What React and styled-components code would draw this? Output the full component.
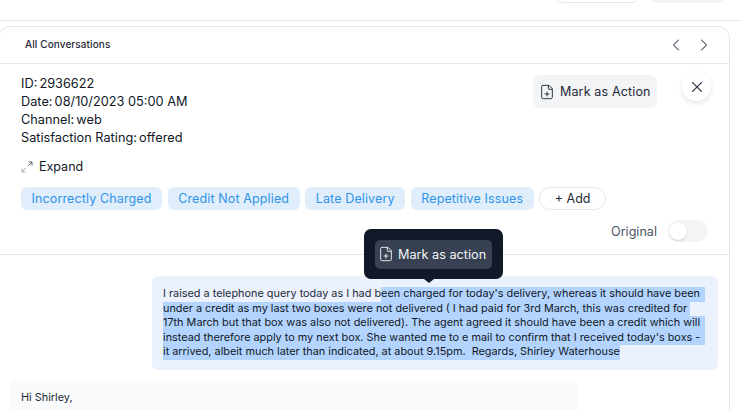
import React from 'react';
import styled, { createGlobalStyle } from 'styled-components';
import { ChevronLeft, ChevronRight, X, FilePlus } from 'lucide-react';

const GlobalStyle = createGlobalStyle`
  html, body {
    margin: 0;
    padding: 0;
    background: #fff;
    overflow: hidden;
  }
  * { box-sizing: border-box; }
`;

const Page = styled.div`
  position: relative;
  width: 741px;
  height: 410px;
  overflow: hidden;
  font-family: Inter, "Liberation Sans", sans-serif;
  color: #111827;
`;

const TopBar = styled.div`
  height: 21px;
  border-bottom: 1px solid #e5e7eb;
  display: flex;
  justify-content: flex-end;
  align-items: flex-end;
  gap: 9px;
  padding: 0 15px 17px 0;
`;

const TopButton = styled.div`
  width: ${(p) => p.$w}px;
  height: 24px;
  border-radius: 8px;
  background: ${(p) => (p.$soft ? '#f3f4f6' : '#fff')};
  border: 1px solid ${(p) => (p.$soft ? '#f3f4f6' : '#e5e7eb')};
`;

const Card = styled.div`
  margin: 5px 11px 0 -2px;
  height: 400px;
  border: 1px solid #e5e7eb;
  border-radius: 12px 12px 0 0;
  background: #fff;
`;

const CardHeader = styled.div`
  height: 37px;
  border-bottom: 1px solid #e5e7eb;
  display: flex;
  align-items: center;
  justify-content: space-between;
  padding: 0 15px 0 26px;
`;

const HeaderTitle = styled.div`
  font-size: 10px;
  font-weight: 500;
  color: #1f2937;
  letter-spacing: 0.1px;
  margin-bottom: 2px;
`;

const Pager = styled.div`
  display: flex;
  gap: 8px;
  color: #374151;
`;

const Details = styled.div`
  position: relative;
  height: 191px;
  padding: 11px 0 0 22px;
  border-bottom: 1px solid #e5e7eb;
`;

const MetaLine = styled.div`
  font-size: 12.75px;
  line-height: 18px;
  color: #111827;
`;

const MetaLabel = styled.span`
  margin-right: -1.5px;
`;

const ActionButton = styled.div`
  position: absolute;
  top: 11px;
  left: 534px;
  width: 124px;
  height: 33px;
  border-radius: 7px;
  background: #f3f4f6;
  color: #1f2937;
  display: flex;
  align-items: center;
  gap: 5px;
  padding-left: 6px;
  font-size: 12.5px;
  letter-spacing: 0.15px;
`;

const CloseButton = styled.div`
  position: absolute;
  top: 8px;
  left: 683px;
  width: 29px;
  height: 29px;
  border-radius: 50%;
  background: #fff;
  box-shadow: 0 2px 5px rgba(17, 24, 39, 0.12);
  color: #374151;
  display: flex;
  align-items: center;
  justify-content: center;
`;

const Expand = styled.div`
  margin-top: 11px;
  display: flex;
  align-items: center;
  gap: 6px;
  font-size: 12.5px;
  line-height: 18px;
`;

const Tags = styled.div`
  margin-top: 11px;
  display: flex;
  gap: 5.6px;
`;

const Tag = styled.div`
  height: 23px;
  padding: 0 10.5px;
  border-radius: 6px;
  background: #e0eefc;
  color: #2e93ea;
  font-size: 12.5px;
  line-height: 23px;
  letter-spacing: 0.13px;
`;

const AddTag = styled.div`
  height: 23px;
  padding: 0 14.5px;
  border-radius: 12px;
  border: 1px solid #e5e7eb;
  color: #1f2937;
  font-size: 12.5px;
  line-height: 21px;
`;

const OriginalRow = styled.div`
  position: absolute;
  top: 156px;
  right: 21px;
  display: flex;
  align-items: center;
  gap: 11px;
  font-size: 12.6px;
  color: #4b5563;
`;

const Toggle = styled.div`
  position: relative;
  width: 40px;
  height: 22px;
  border-radius: 11px;
  background: #f3f4f6;
`;

const Knob = styled.div`
  position: absolute;
  top: 2px;
  left: 1px;
  width: 18px;
  height: 18px;
  border-radius: 50%;
  background: #fff;
  box-shadow: 0 1px 2px rgba(0, 0, 0, 0.15);
`;

const Thread = styled.div`
  display: flex;
  flex-direction: column;
  padding: 21px 11px 0 11px;
  gap: 11px;
`;

const Customer = styled.div`
  align-self: flex-end;
  width: 566px;
  height: 94px;
  padding: 11px 11px;
  border-radius: 6px;
  background: #ebf2fe;
  font-size: 10.87px;
  line-height: 13px;
  color: #1f2937;
`;

const Line = styled.div`
  height: 14.5px;
  white-space: pre;
`;

const Selected = styled.span`
  display: inline-block;
  height: 14.5px;
  background: #b3d4fe;
  color: #111827;
  padding-right: ${(p) => p.$pad || 0}px;
`;

const Agent = styled.div`
  width: 567px;
  height: 60px;
  padding: 9px 11px;
  border-radius: 6px;
  background: #f9fafb;
  font-size: 10.87px;
  line-height: 14.5px;
  color: #1f2937;
`;

const Popover = styled.div`
  position: absolute;
  top: 229px;
  left: 364px;
  width: 139px;
  height: 50px;
  border-radius: 7px;
  background: #111827;
  display: flex;
  align-items: center;
  padding-left: 11px;

  &::after {
    content: '';
    position: absolute;
    bottom: -4px;
    left: 60px;
    border-left: 5px solid transparent;
    border-right: 5px solid transparent;
    border-top: 4px solid #111827;
  }
`;

const PopoverAction = styled.div`
  width: 117px;
  height: 29px;
  border-radius: 5px;
  background: #374151;
  color: #f3f4f6;
  display: flex;
  align-items: center;
  gap: 4px;
  padding-left: 3px;
  font-size: 12.7px;
`;

const ExpandIcon = () => (
  <svg width="12" height="12" viewBox="0 0 12 12" fill="none" strokeWidth="0.9">
    <path d="M7 5L11 1M7.5 1H11V4.5" stroke="#4b5563" />
    <path d="M5 7L1 11M1 7.5V11H4.5" stroke="#9ca3af" />
  </svg>
);

const tags = ['Incorrectly Charged', 'Credit Not Applied', 'Late Delivery', 'Repetitive Issues'];

export default function App() {
  return (
    <Page>
      <GlobalStyle />
      <TopBar>
        <TopButton $w={85} />
        <TopButton $w={77} $soft />
      </TopBar>
      <Card>
        <CardHeader>
          <HeaderTitle>All Conversations</HeaderTitle>
          <Pager>
            <ChevronLeft size={20} strokeWidth={1.25} />
            <ChevronRight size={20} strokeWidth={1.25} />
          </Pager>
        </CardHeader>
        <Details>
          <MetaLine><MetaLabel>ID:</MetaLabel> 2936622</MetaLine>
          <MetaLine><MetaLabel>Date:</MetaLabel> 08/10/2023 05:00 AM</MetaLine>
          <MetaLine><MetaLabel>Channel:</MetaLabel> web</MetaLine>
          <MetaLine><MetaLabel>Satisfaction Rating:</MetaLabel> offered</MetaLine>
          <ActionButton>
            <FilePlus size={16} strokeWidth={1.4} />
            Mark as Action
          </ActionButton>
          <CloseButton>
            <X size={18} strokeWidth={1.5} />
          </CloseButton>
          <Expand>
            <ExpandIcon />
            Expand
          </Expand>
          <Tags>
            {tags.map((t) => (
              <Tag key={t}>{t}</Tag>
            ))}
            <AddTag>+ Add</AddTag>
          </Tags>
          <OriginalRow>
            Original
            <Toggle>
              <Knob />
            </Toggle>
          </OriginalRow>
        </Details>
        <Thread>
          <Customer>
            <Line>I raised a telephone query today as I had b<Selected $pad={5}>een charged for today's delivery, whereas it should have been</Selected></Line>
            <Line><Selected $pad={3}>under a credit as my last two boxes were not delivered ( I had paid for 3rd March, this was credited for</Selected></Line>
            <Line><Selected $pad={5}>17th March but that box was also not delivered). The agent agreed it should have been a credit which will</Selected></Line>
            <Line><Selected $pad={5}>instead therefore apply to my next box. She wanted me to e mail to confirm that I received today's boxs -</Selected></Line>
            <Line><Selected>it arrived, albeit much later than indicated, at about 9.15pm.  Regards, Shirley Waterhouse</Selected></Line>
          </Customer>
          <Agent>Hi Shirley,</Agent>
        </Thread>
      </Card>
      <Popover>
        <PopoverAction>
          <FilePlus size={16} strokeWidth={1.4} />
          Mark as action
        </PopoverAction>
      </Popover>
    </Page>
  );
}
